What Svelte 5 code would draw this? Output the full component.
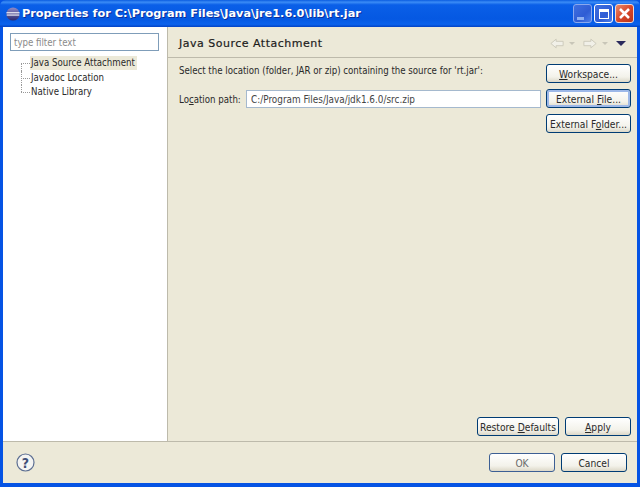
<script>
  const tree = ["Java Source Attachment", "Javadoc Location", "Native Library"];
</script>

<div class="window">
  <header class="titlebar">
    <svg class="appicon" width="14" height="14" viewBox="0 0 16 16">
      <defs>
        <linearGradient id="ball" x1="0" y1="0" x2="0" y2="1">
          <stop offset="0" stop-color="#8f8ac8" />
          <stop offset="1" stop-color="#2c2a6e" />
        </linearGradient>
      </defs>
      <circle cx="8" cy="8" r="7.5" fill="url(#ball)" />
      <rect x="0.5" y="6" width="15" height="1.2" fill="#fff" />
      <rect x="0.8" y="8.6" width="14.4" height="1.2" fill="#fff" />
    </svg>
    <span class="title">Properties for C:\Program Files\Java\jre1.6.0\lib\rt.jar</span>
    <div class="winbtns">
      <div class="winbtn blue"><span class="min"></span></div>
      <div class="winbtn blue active"><span class="max"></span></div>
      <div class="winbtn red">
        <svg width="13" height="13" viewBox="0 0 13 13">
          <path d="M2 2 L11 11 M11 2 L2 11" stroke="#fff" stroke-width="2.6" />
        </svg>
      </div>
    </div>
  </header>

  <div class="client">
    <div class="main">
      <aside class="sidebar">
        <input class="filter" type="text" placeholder="type filter text" />
        <ul class="tree">
          {#each tree as item, i}
            <li class:selected={i === 0} class:last={i === tree.length - 1}><span>{item}</span></li>
          {/each}
        </ul>
      </aside>

      <section class="page">
        <div class="pagehead">
          <h1>Java Source Attachment</h1>
          <div class="nav">
            <svg width="14" height="11" viewBox="0 0 16 12">
              <path d="M1 6 L7 1 V3.5 H15 V8.5 H7 V11 Z" fill="#f1f0e8" stroke="#c9c7b8" />
            </svg>
            <i class="drop"></i>
            <svg width="14" height="11" viewBox="0 0 16 12">
              <path d="M15 6 L9 1 V3.5 H1 V8.5 H9 V11 Z" fill="#f1f0e8" stroke="#c9c7b8" />
            </svg>
            <i class="drop"></i>
            <i class="menu"></i>
          </div>
        </div>

        <div class="pagebody">
          <div class="fields">
            <p class="desc">Select the location (folder, JAR or zip) containing the source for 'rt.jar':</p>
            <div class="locrow">
              <label for="loc">Lo<u>c</u>ation path:</label>
              <input id="loc" type="text" value="C:/Program Files/Java/jdk1.6.0/src.zip" />
            </div>
          </div>
          <div class="sidebtns">
            <button class="btn wide"><u>W</u>orkspace...</button>
            <button class="btn wide focus">External <u>F</u>ile...</button>
            <button class="btn wide">External F<u>o</u>lder...</button>
          </div>
        </div>

        <div class="pagefoot">
          <button class="btn restore">Restore <u>D</u>efaults</button>
          <button class="btn apply"><u>A</u>pply</button>
        </div>
      </section>
    </div>

    <footer class="bottom">
      <svg class="help" width="19" height="19" viewBox="0 0 19 19">
        <circle cx="9.5" cy="9.5" r="8.5" fill="#f4f4f2" stroke="#5d6f92" stroke-width="1.2" />
        <text x="9.5" y="14.5" text-anchor="middle" class="q">?</text>
      </svg>
      <div class="okcancel">
        <button class="btn ok">OK</button>
        <button class="btn cancel">Cancel</button>
      </div>
    </footer>
  </div>
</div>

<style>
  :global(body) {
    margin: 0;
    background: #0a3fd0;
  }

  .window {
    width: 640px;
    height: 487px;
    display: flex;
    flex-direction: column;
    background: #0553e4;
    font-family: "DejaVu Sans Condensed", "DejaVu Sans", sans-serif;
    font-stretch: condensed;
    font-size: 9.6px;
    color: #2a2a2a;
    overflow: hidden;
  }

  .titlebar {
    height: 27px;
    flex: none;
    display: flex;
    align-items: center;
    padding: 0 6px 0 6px;
    box-sizing: border-box;
    background: linear-gradient(#0a5ce0 0%, #3b8cf6 8%, #0a5fe8 18%, #0558e2 70%, #0b62ec 90%, #0342c4 100%);
    border-radius: 6px 6px 0 0;
  }

  .appicon {
    flex: none;
    margin-right: 2px;
  }

  .title {
    flex: 1;
    color: #fff;
    font-family: "DejaVu Sans", sans-serif;
    font-stretch: normal;
    font-weight: bold;
    font-size: 11.3px;
    white-space: nowrap;
    text-shadow: 1px 1px 0 #0a2f9a;
  }

  .winbtns {
    display: flex;
    gap: 2px;
  }

  .winbtn {
    width: 19px;
    height: 19px;
    box-sizing: border-box;
    border: 1px solid #dbe6fb;
    border-radius: 3px;
    display: flex;
    align-items: center;
    justify-content: center;
  }

  .blue {
    background: linear-gradient(135deg, #3f6fe0, #2f5cd4 60%, #4d7ee8);
    border-color: #8aa8ee;
  }

  .blue.active {
    border-color: #fff;
  }

  .red {
    background: linear-gradient(135deg, #e88a6c, #d8482a 50%, #b8321a);
    border-color: #f2d8d0;
  }

  .min {
    width: 7px;
    height: 3px;
    background: #8fb0f2;
    margin-top: 9px;
    margin-right: 5px;
  }

  .max {
    width: 10px;
    height: 10px;
    box-sizing: border-box;
    border: 1px solid #fff;
    border-top-width: 3px;
  }

  .client {
    flex: 1;
    margin: 0 3px 4px;
    background: #ece9d8;
    display: flex;
    flex-direction: column;
    min-height: 0;
  }

  .main {
    flex: 1;
    display: flex;
    min-height: 0;
    border-bottom: 1px solid #bdbaab;
  }

  .sidebar {
    flex: none;
    background: #fff;
    border-right: 1px solid #bdbaab;
    padding: 6px 7px;
    width: 150px;
  }

  .filter {
    display: block;
    width: 149px;
    height: 18px;
    box-sizing: border-box;
    border: 1px solid #7f9db9;
    padding: 0 3px;
    font: inherit;
    font-stretch: condensed;
    outline: none;
  }

  .filter::placeholder {
    color: #8a8a8a;
    opacity: 1;
  }

  .tree {
    list-style: none;
    margin: 5px 0 0 0;
    padding: 0 0 0 11px;
  }

  .tree li {
    height: 14.5px;
    line-height: 14px;
    position: relative;
    padding-left: 9px;
    white-space: nowrap;
  }

  .tree li::before {
    content: "";
    position: absolute;
    left: 0;
    top: 7px;
    width: 9px;
    border-top: 1px dotted #999;
  }

  .tree li::after {
    content: "";
    position: absolute;
    left: 0;
    top: 0;
    height: 100%;
    border-left: 1px dotted #999;
  }

  .tree li:first-child::after {
    top: 7px;
    height: 8px;
  }

  .tree li.last::after {
    height: 7px;
  }

  .tree li span {
    display: inline-block;
    padding: 0 2px 0 1px;
    height: 14px;
  }

  .tree li.selected span {
    background: #ece9d8;
  }

  .page {
    flex: 1;
    display: flex;
    flex-direction: column;
    min-width: 0;
  }

  .pagehead {
    height: 31px;
    flex: none;
    box-sizing: border-box;
    display: flex;
    align-items: center;
    justify-content: space-between;
    padding: 2px 11px 0 11px;
    border-bottom: 1px solid #bdbaab;
  }

  h1 {
    margin: 0;
    font-family: "DejaVu Sans", sans-serif;
    font-stretch: normal;
    font-size: 11px;
    font-weight: normal;
    letter-spacing: 0.5px;
    color: #1c1c1c;
    -webkit-text-stroke: 0.2px #1c1c1c;
  }

  .nav {
    display: flex;
    align-items: center;
  }

  .drop {
    width: 0;
    height: 0;
    border: 3px solid transparent;
    border-top: 3px solid #c8c6b8;
    border-bottom: 0;
    margin: 0 8px 0 5px;
  }

  .menu {
    width: 0;
    height: 0;
    border: 5px solid transparent;
    border-top: 5px solid #2a2a5c;
    border-bottom: 0;
  }

  .pagebody {
    flex: 1;
    display: flex;
    padding: 6px 6px 0 11px;
    gap: 5px;
    min-height: 0;
  }

  .fields {
    flex: 1;
    min-width: 0;
  }

  .desc {
    margin: 0;
    height: 13px;
    padding-top: 1px;
    line-height: 12px;
    white-space: nowrap;
  }

  .locrow {
    margin-top: 12px;
    display: flex;
    align-items: center;
    gap: 6px;
  }

  .locrow label {
    flex: none;
    width: 61px;
    white-space: nowrap;
  }

  .locrow input {
    flex: 1;
    min-width: 0;
    height: 18px;
    box-sizing: border-box;
    border: 1px solid #a5b9ce;
    padding: 0 4px;
    font: inherit;
    font-size: 9.9px;
    font-stretch: condensed;
    color: #444;
    outline: none;
  }

  .sidebtns {
    flex: none;
    display: flex;
    flex-direction: column;
    gap: 6px;
  }

  .btn {
    height: 19px;
    box-sizing: border-box;
    padding: 1px 0 0;
    font: inherit;
    font-size: 10.2px;
    font-stretch: condensed;
    color: #2a2a2a;
    border: 1px solid #003c74;
    border-radius: 3px;
    background: linear-gradient(#fff, #f3f2ea 70%, #dcd8c8);
    white-space: nowrap;
  }

  .btn.focus {
    box-shadow: inset 0 0 0 2px #9db8e8;
  }

  .wide {
    width: 85px;
  }

  .pagefoot {
    flex: none;
    display: flex;
    justify-content: flex-end;
    gap: 6px;
    padding: 0 6px 5px 0;
  }

  .restore {
    width: 82px;
  }

  .apply {
    width: 66px;
  }

  .bottom {
    height: 41px;
    flex: none;
    display: flex;
    align-items: center;
    justify-content: space-between;
    padding: 0 10px 0 13px;
    box-sizing: border-box;
  }

  .q {
    font-family: "DejaVu Sans", sans-serif;
    font-weight: bold;
    font-size: 14px;
    fill: #3f4f78;
  }

  .okcancel {
    display: flex;
    gap: 6px;
  }

  .ok,
  .cancel {
    width: 66px;
  }

  .ok {
    color: #6a6a6a;
    border-color: #3c5f94;
  }
</style>
